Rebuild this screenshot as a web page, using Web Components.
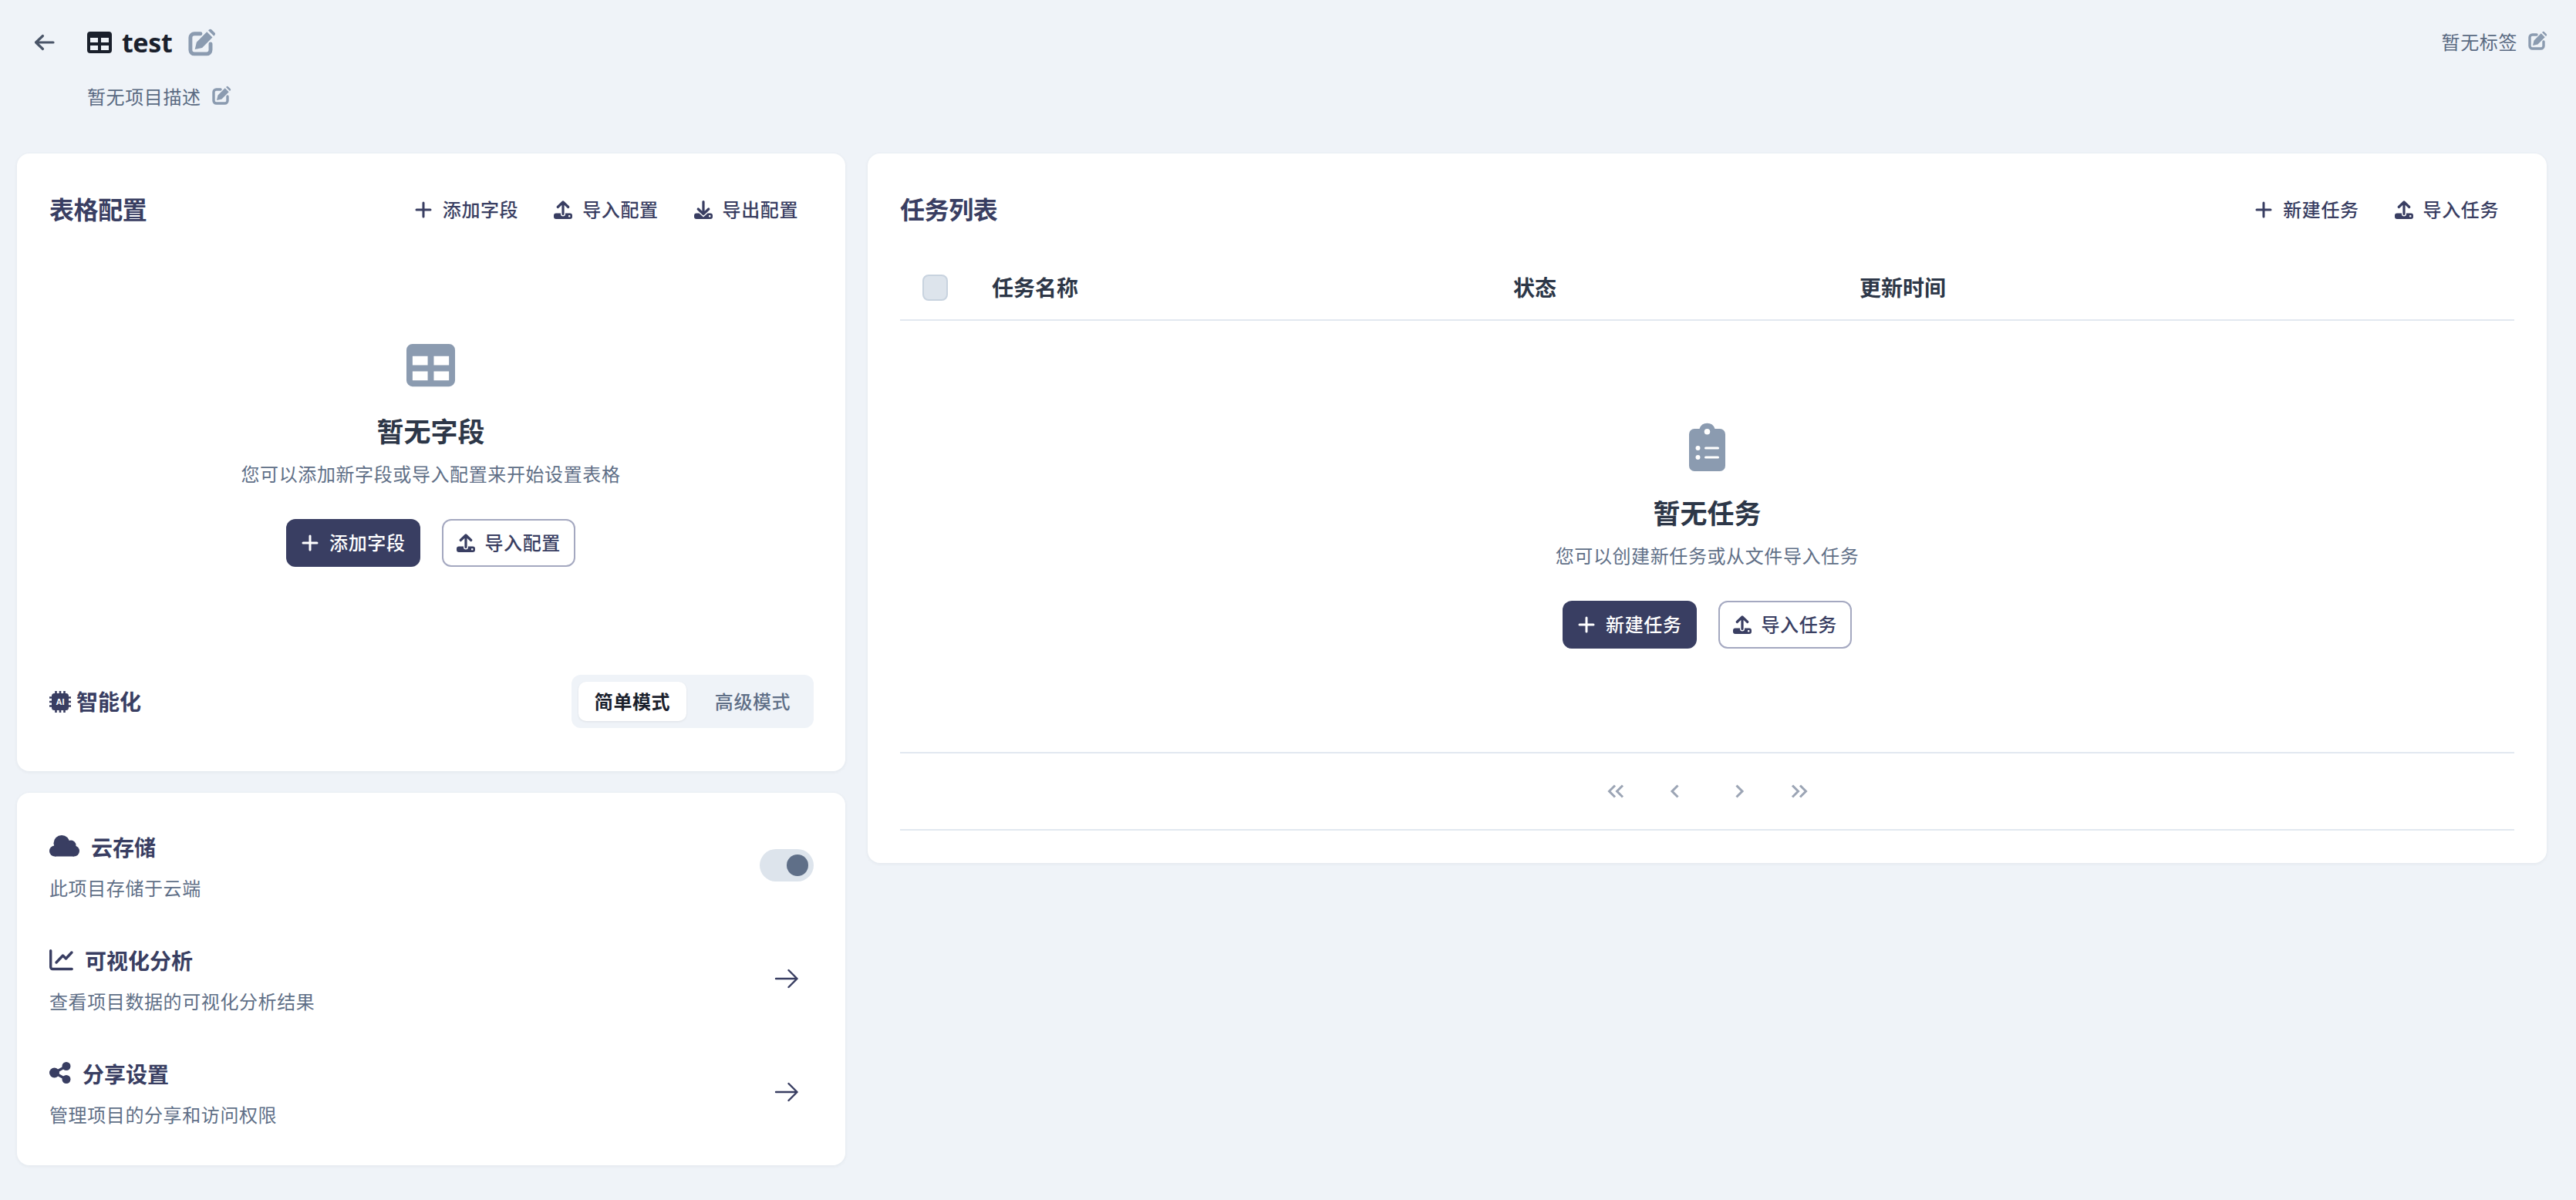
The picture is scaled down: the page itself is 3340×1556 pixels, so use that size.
<!DOCTYPE html>
<html lang="zh">
<head>
<meta charset="utf-8">
<title>test</title>
<style>
  html, body { margin: 0; background: #eff3f8; }
  body { font-family: "Noto Sans", "Noto Sans CJK SC", sans-serif; color: #2d3748; }
</style>
</head>
<body>
<app-page></app-page>
<script>
const FONT = `"Noto Sans", "Noto Sans CJK SC", sans-serif`;

const ICONS = {
  back: [25, 20, `<path d="M1.5 10H24M10.5 1.5 1.5 10l9 8.5" fill="none" stroke="currentColor" stroke-width="3.2" stroke-linecap="round" stroke-linejoin="round"/>`],
  table: [32, 28, `<path fill-rule="evenodd" fill="currentColor" d="M4 0h24a4 4 0 0 1 4 4v20a4 4 0 0 1-4 4H4a4 4 0 0 1-4-4V4a4 4 0 0 1 4-4ZM4 8v6h10V8ZM18 8v6h10V8ZM4 18v6h10v-6ZM18 18v6h10v-6Z"/>`],
  edit: [24, 24, `<path d="M11 4H5.500A3.500 3.500 0 0 0 2 7.500v11A3.500 3.500 0 0 0 5.500 22h11a3.500 3.500 0 0 0 3.500-3.500V13" fill="none" stroke="currentColor" stroke-width="3.400" stroke-linecap="round"/><path fill="currentColor" d="M6 18l1.500-6.500L16.700 2.300l5 5L12.500 16.500ZM18 1l.6-.6a1.700 1.700 0 0 1 2.400 0l2.600 2.600a1.700 1.700 0 0 1 0 2.400l-.6.6Z"/>`],
  plus: [24, 24, `<path d="M12 3v18M3 12h18" fill="none" stroke="currentColor" stroke-width="3" stroke-linecap="round"/>`],
  upload: [24, 24, `<path fill-rule="evenodd" fill="currentColor" d="M3 16.500h6v1a3 3 0 0 0 6 0v-1h6a3 3 0 0 1 3 3v1.500a3 3 0 0 1-3 3H3a3 3 0 0 1-3-3v-1.500a3 3 0 0 1 3-3Zm17.200 2.500a1.300 1.300 0 1 0 0 2.600a1.300 1.300 0 0 0 0-2.600Z"/><path d="M12 17.500V2M5.200 8.500 12 2l6.800 6.500" fill="none" stroke="currentColor" stroke-width="3.200" stroke-linecap="round" stroke-linejoin="round"/>`],
  download: [24, 24, `<path fill-rule="evenodd" fill="currentColor" d="M3 16.500h3.500l5.500 5 5.500-5H21a3 3 0 0 1 3 3v1.500a3 3 0 0 1-3 3H3a3 3 0 0 1-3-3v-1.500a3 3 0 0 1 3-3Zm17.200 2.500a1.300 1.300 0 1 0 0 2.600a1.300 1.300 0 0 0 0-2.600Z"/><path d="M12 1.500V17.500M5.200 11l6.800 6.500 6.800-6.500" fill="none" stroke="currentColor" stroke-width="3.200" stroke-linecap="round" stroke-linejoin="round"/>`],
  chip: [28, 28, `<rect x="3" y="3" width="22" height="22" rx="3.500" fill="currentColor"/><path d="M8.500 0v28M14 0v28M19.500 0v28M0 8.500h28M0 14h28M0 19.500h28" stroke="currentColor" stroke-width="2.600"/><text x="14" y="18" text-anchor="middle" font-size="11" font-weight="700" fill="#fff" font-family="Liberation Sans, sans-serif">AI</text>`],
  cloud: [39, 28, `<g fill="currentColor"><circle cx="16" cy="10.500" r="10.500"/><circle cx="28" cy="13" r="6.500"/><circle cx="32" cy="20.500" r="7"/><circle cx="7" cy="20.500" r="7"/><rect x="7" y="16" width="25" height="11.500"/></g>`],
  chart: [31, 27, `<path d="M1.700 1.700V23a2.500 2.500 0 0 0 2.500 2.500h25" fill="none" stroke="currentColor" stroke-width="3.400" stroke-linecap="round"/><path d="m9 17 8.500-9 4 4L29 4" fill="none" stroke="currentColor" stroke-width="3.400" stroke-linecap="round" stroke-linejoin="round"/>`],
  share: [28, 28, `<g fill="currentColor"><circle cx="6.500" cy="14" r="6.500"/><circle cx="22" cy="5.500" r="5.500"/><circle cx="22" cy="22.500" r="5.500"/></g><path d="M22 5.500 6.500 14 22 22.500" fill="none" stroke="currentColor" stroke-width="3.400"/>`],
  arrow: [30, 24, `<path d="M1 12h27.500M17.500 1l11 11-11 11" fill="none" stroke="currentColor" stroke-width="2.400" stroke-linecap="round" stroke-linejoin="round"/>`],
  clipboard: [47, 63, `<path fill-rule="evenodd" fill="currentColor" d="M7 8h6.500a10.500 10.500 0 0 1 20 0H40a7 7 0 0 1 7 7v41a7 7 0 0 1-7 7H7a7 7 0 0 1-7-7V15a7 7 0 0 1 7-7Zm16.500 0a3.800 3.800 0 1 0 0 7.600 3.800 3.800 0 0 0 0-7.600ZM11.500 30a3 3 0 1 0 0 6 3 3 0 0 0 0-6Zm0 12a3 3 0 1 0 0 6 3 3 0 0 0 0-6ZM21.500 31.500a1.500 1.500 0 0 0 0 3h16a1.500 1.500 0 0 0 0-3Zm0 12a1.500 1.500 0 0 0 0 3h16a1.500 1.500 0 0 0 0-3Z"/>`],
  first: [22, 18, `<path d="M10 1.500 2.500 9l7.500 7.500M20 1.500 12.500 9l7.500 7.500" fill="none" stroke="currentColor" stroke-width="3"/>`],
  prev: [11, 18, `<path d="M9.500 1.500 2 9l7.500 7.500" fill="none" stroke="currentColor" stroke-width="3"/>`],
  next: [11, 18, `<path d="M1.500 1.500 9 9l-7.500 7.500" fill="none" stroke="currentColor" stroke-width="3"/>`],
  last: [22, 18, `<path d="M2 1.500 9.500 9 2 16.500M12 1.500 19.500 9 12 16.500" fill="none" stroke="currentColor" stroke-width="3"/>`]
};

class UiIcon extends HTMLElement {
  connectedCallback() {
    const [w, h, body] = ICONS[this.getAttribute('name')];
    const scale = parseFloat(this.getAttribute('scale') || '1');
    this.attachShadow({ mode: 'open' }).innerHTML = `
      <style>
        :host { display: inline-flex; flex: none; line-height: 0; }
        svg { overflow: visible; }
      </style>
      <svg width="${w * scale}" height="${h * scale}" viewBox="0 0 ${w} ${h}">${body}</svg>`;
  }
}

// text button of the card heads, and the solid / outline ones of the empty states
class ActionBtn extends HTMLElement {
  connectedCallback() {
    const variant = this.getAttribute('variant') || 'ghost';
    this.attachShadow({ mode: 'open' }).innerHTML = `
      <style>
        :host { display: inline-flex; font-family: ${FONT}; }
        button {
          display: inline-flex; align-items: center; gap: 13px; box-sizing: border-box;
          height: 62px; padding: 0 20px; border-radius: 12px; border: 0; background: none;
          color: #393e62; font: 500 24px/36px ${FONT}; letter-spacing: .6px;
        }
        button.solid { background: #393e62; color: #fff; padding: 0 19px; }
        button.outline { border: 2px solid #a4a8c0; background: #fff; padding: 0 17px; }
      </style>
      <button class="${variant}"><ui-icon name="${this.getAttribute('icon')}"></ui-icon><slot></slot></button>`;
  }
}

class ProjectHeader extends HTMLElement {
  connectedCallback() {
    this.attachShadow({ mode: 'open' }).innerHTML = `
      <style>
        :host { display: flex; justify-content: space-between; height: 199px; box-sizing: border-box; padding-top: 37px; font-family: ${FONT}; }
        .left { display: flex; }
        .back { color: #4a5568; margin: 8px 43px 0 23px; height: 20px; }
        .title { display: flex; align-items: center; height: 36px; color: #1a202c; }
        .title h1 { margin: 0 21px 0 13px; font: 700 34px/36px ${FONT}; letter-spacing: -.4px; }
        .edit { color: #8b9bb0; }
        .desc { display: flex; align-items: center; margin-top: 35px; height: 36px; color: #5a6a82; font: 400 24px/36px ${FONT}; letter-spacing: .6px; }
        .desc .edit { margin-left: 14px; margin-top: -4px; }
        .tags { display: flex; align-items: center; height: 36px; color: #5a6a82; font: 400 24px/36px ${FONT}; letter-spacing: .6px; }
        .tags .edit { margin-left: 14px; margin-top: -4px; }
      </style>
      <div class="left">
        <ui-icon class="back" name="back"></ui-icon>
        <div>
          <div class="title">
            <ui-icon name="table"></ui-icon>
            <h1>test</h1>
            <ui-icon class="edit" name="edit" scale="1.45"></ui-icon>
          </div>
          <div class="desc">暂无项目描述<ui-icon class="edit" name="edit"></ui-icon></div>
        </div>
      </div>
      <div class="tags">暂无标签<ui-icon class="edit" name="edit"></ui-icon></div>`;
  }
}

class CardHead extends HTMLElement {
  connectedCallback() {
    this.attachShadow({ mode: 'open' }).innerHTML = `
      <style>
        :host { display: flex; align-items: center; justify-content: space-between; height: 62px; font-family: ${FONT}; }
        h2 { margin: 0; color: #393e62; font: 600 32px/44px ${FONT}; letter-spacing: -.4px; }
        .actions { display: flex; gap: 6px; }
      </style>
      <h2>${this.getAttribute('heading')}</h2>
      <div class="actions"><slot></slot></div>`;
  }
}

class EmptyState extends HTMLElement {
  connectedCallback() {
    this.attachShadow({ mode: 'open' }).innerHTML = `
      <style>
        :host { display: flex; flex-direction: column; align-items: center; font-family: ${FONT}; }
        .icon { color: #8b9bb0; margin-bottom: var(--icon-gap, 35px); }
        h3 { margin: 0; color: #2d3748; font: 600 35px/48px ${FONT}; }
        p { margin: 13px 0 40px; color: #5f6f87; font: 400 24px/36px ${FONT}; letter-spacing: .6px; }
        .buttons { display: flex; gap: 28px; }
      </style>
      <ui-icon class="icon" name="${this.getAttribute('icon')}" scale="${this.getAttribute('scale') || 1}"></ui-icon>
      <h3>${this.getAttribute('heading')}</h3>
      <p>${this.getAttribute('hint')}</p>
      <div class="buttons"><slot></slot></div>`;
  }
}

class ModeSwitch extends HTMLElement {
  connectedCallback() {
    this.attachShadow({ mode: 'open' }).innerHTML = `
      <style>
        :host { display: flex; align-items: center; justify-content: space-between; font-family: ${FONT}; }
        .label { display: flex; align-items: center; gap: 7px; color: #393e62; font: 600 28px/40px ${FONT}; }
        .seg { display: flex; gap: 16px; padding: 9px; width: 314px; height: 69px; box-sizing: border-box; background: #eff3f8; border-radius: 12px; }
        .seg span { display: flex; align-items: center; justify-content: center; width: 140px; height: 51px; font: 500 24px/36px ${FONT}; letter-spacing: .6px; border-radius: 10px; }
        .on { background: #fff; color: #1a202c; font-weight: 600 !important; box-shadow: 0 1px 3px rgba(0,0,0,.08); }
        .off { color: #5f6f87; }
      </style>
      <div class="label"><ui-icon name="chip"></ui-icon>智能化</div>
      <div class="seg"><span class="on">简单模式</span><span class="off">高级模式</span></div>`;
  }
}

class ConfigCard extends HTMLElement {
  connectedCallback() {
    this.attachShadow({ mode: 'open' }).innerHTML = `
      <style>
        :host { display: block; box-sizing: border-box; height: 801px; padding: 42px 41px 56px 42px; background: #fff; border-radius: 16px; box-shadow: 0 1px 4px rgba(45,55,72,.07); }
        empty-state { --icon-gap: 35px; padding: 143px 2px 0 0; }
        mode-switch { margin-top: 140px; }
      </style>
      <card-head heading="表格配置">
        <action-btn icon="plus">添加字段</action-btn>
        <action-btn icon="upload">导入配置</action-btn>
        <action-btn icon="download">导出配置</action-btn>
      </card-head>
      <empty-state icon="table" scale="1.97" heading="暂无字段" hint="您可以添加新字段或导入配置来开始设置表格">
        <action-btn variant="solid" icon="plus">添加字段</action-btn>
        <action-btn variant="outline" icon="upload">导入配置</action-btn>
      </empty-state>
      <mode-switch></mode-switch>`;
  }
}

class FeatureRow extends HTMLElement {
  connectedCallback() {
    this.attachShadow({ mode: 'open' }).innerHTML = `
      <style>
        :host { display: flex; align-items: center; justify-content: space-between; height: 91px; font-family: ${FONT}; }
        .title { display: flex; align-items: center; height: 40px; color: #393e62; font: 600 28px/40px ${FONT}; }
        ui-icon.lead { margin-right: var(--lead-gap, 15px); margin-top: -4px; }
        p { margin: 15px 0 0; color: #5f6f87; font: 400 24px/36px ${FONT}; letter-spacing: .6px; }
        .side { margin-bottom: 5px; display: flex; }
      </style>
      <div>
        <div class="title"><ui-icon class="lead" name="${this.getAttribute('icon')}"></ui-icon>${this.getAttribute('heading')}</div>
        <p>${this.getAttribute('hint')}</p>
      </div>
      <div class="side"><slot></slot></div>`;
  }
}

class ToggleSwitch extends HTMLElement {
  connectedCallback() {
    this.attachShadow({ mode: 'open' }).innerHTML = `
      <style>
        :host { display: flex; justify-content: flex-end; align-items: center; box-sizing: border-box; width: 70px; height: 42px; padding-right: 7px; border-radius: 21px; background: #dde4ec; }
        i { width: 28px; height: 28px; border-radius: 50%; background: #5f6f88; }
      </style>
      <i></i>`;
  }
}

class StorageCard extends HTMLElement {
  connectedCallback() {
    this.attachShadow({ mode: 'open' }).innerHTML = `
      <style>
        :host { display: flex; flex-direction: column; gap: 56px; box-sizing: border-box; height: 483px; padding: 51px 41px 47px 42px; background: #fff; border-radius: 16px; box-shadow: 0 1px 4px rgba(45,55,72,.07); }
        ui-icon { color: #393e62; margin-right: 20px; }
      </style>
      <feature-row icon="cloud" heading="云存储" hint="此项目存储于云端"><toggle-switch></toggle-switch></feature-row>
      <feature-row style="--lead-gap:15px" icon="chart" heading="可视化分析" hint="查看项目数据的可视化分析结果"><ui-icon name="arrow"></ui-icon></feature-row>
      <feature-row style="--lead-gap:15px" icon="share" heading="分享设置" hint="管理项目的分享和访问权限"><ui-icon name="arrow"></ui-icon></feature-row>`;
  }
}

class TaskTable extends HTMLElement {
  connectedCallback() {
    this.attachShadow({ mode: 'open' }).innerHTML = `
      <style>
        :host { display: block; font-family: ${FONT}; }
        .head { display: grid; grid-template-columns: 119px 676px 449px 1fr; align-items: center; height: 83px; margin-top: 28px; border-bottom: 2px solid #e2e8f0; box-sizing: content-box; color: #2d3748; font: 700 28px/40px ${FONT}; }
        .check { width: 33px; height: 34px; box-sizing: border-box; margin-left: 29px; background: #dde4ec; border: 2px solid #c8d3df; border-radius: 8px; }
        .body { padding: 132px 0 134px; border-bottom: 2px solid #e2e8f0; }
        .pager { display: flex; justify-content: center; align-items: center; gap: 13px; height: 98px; border-bottom: 2px solid #e2e8f0; color: #9ca5b5; }
        .pager span { display: flex; justify-content: center; width: 64px; }
        .pager span:nth-child(2) { margin-right: 7px; }
      </style>
      <div class="head"><div class="check"></div><div>任务名称</div><div>状态</div><div>更新时间</div></div>
      <div class="body"><slot></slot></div>
      <div class="pager">
        <span><ui-icon name="first"></ui-icon></span>
        <span><ui-icon name="prev"></ui-icon></span>
        <span><ui-icon name="next"></ui-icon></span>
        <span><ui-icon name="last"></ui-icon></span>
      </div>`;
  }
}

class TaskCard extends HTMLElement {
  connectedCallback() {
    this.attachShadow({ mode: 'open' }).innerHTML = `
      <style>
        :host { display: block; box-sizing: border-box; align-self: start; padding: 42px 42px 42px; background: #fff; border-radius: 16px; box-shadow: 0 1px 4px rgba(45,55,72,.07); }
        empty-state { --icon-gap: 31px; }
      </style>
      <card-head heading="任务列表">
        <action-btn icon="plus">新建任务</action-btn>
        <action-btn icon="upload">导入任务</action-btn>
      </card-head>
      <task-table>
        <empty-state icon="clipboard" heading="暂无任务" hint="您可以创建新任务或从文件导入任务">
          <action-btn variant="solid" icon="plus">新建任务</action-btn>
          <action-btn variant="outline" icon="upload">导入任务</action-btn>
        </empty-state>
      </task-table>`;
  }
}

class AppPage extends HTMLElement {
  connectedCallback() {
    this.attachShadow({ mode: 'open' }).innerHTML = `
      <style>
        :host { display: block; min-height: 1556px; box-sizing: border-box; padding: 0 38px 0 22px; background: #eff3f8; }
        .grid { display: grid; grid-template-columns: 1074px 2177px; column-gap: 29px; align-items: start; }
        .col { display: flex; flex-direction: column; gap: 28px; }
      </style>
      <project-header></project-header>
      <div class="grid">
        <div class="col">
          <config-card></config-card>
          <storage-card></storage-card>
        </div>
        <task-card></task-card>
      </div>`;
  }
}

customElements.define('ui-icon', UiIcon);
customElements.define('action-btn', ActionBtn);
customElements.define('project-header', ProjectHeader);
customElements.define('card-head', CardHead);
customElements.define('empty-state', EmptyState);
customElements.define('mode-switch', ModeSwitch);
customElements.define('config-card', ConfigCard);
customElements.define('feature-row', FeatureRow);
customElements.define('toggle-switch', ToggleSwitch);
customElements.define('storage-card', StorageCard);
customElements.define('task-table', TaskTable);
customElements.define('task-card', TaskCard);
customElements.define('app-page', AppPage);
</script>
</body>
</html>
